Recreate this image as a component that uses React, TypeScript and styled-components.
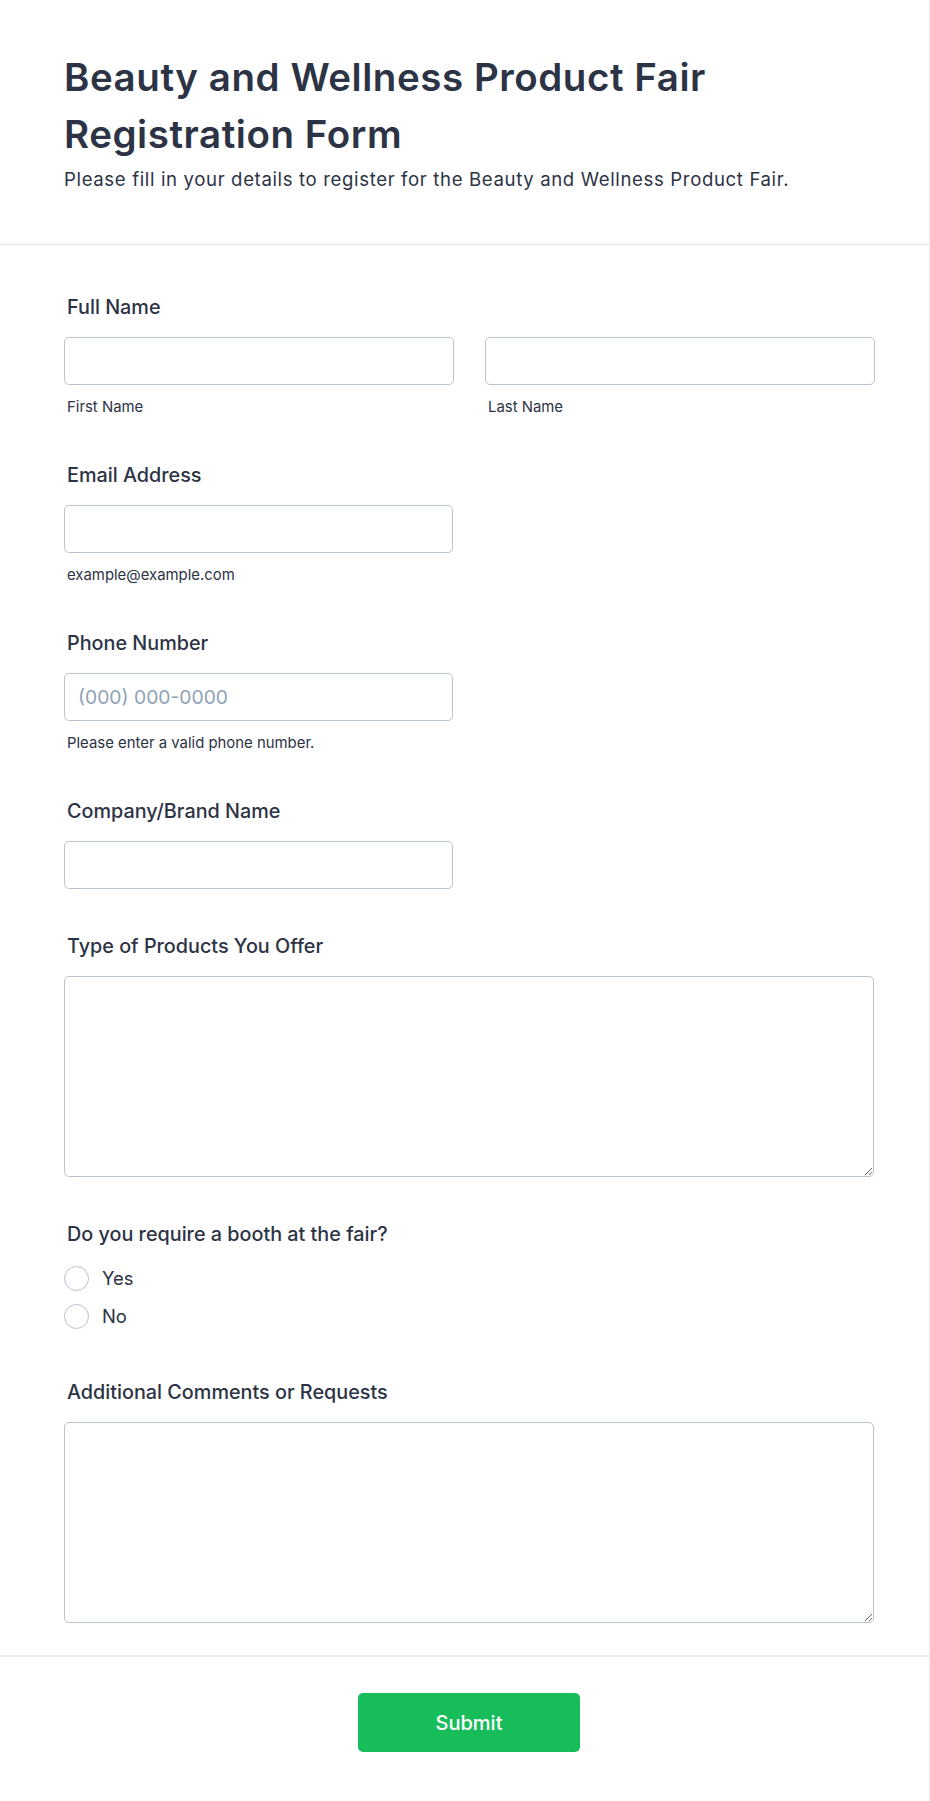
import styled, { createGlobalStyle } from 'styled-components';

const GlobalStyle = createGlobalStyle`
  * {
    box-sizing: border-box;
  }
  body {
    margin: 0;
    background: #ffffff;
    font-family: Inter, "Noto Sans", sans-serif;
    color: #2c3345;
  }
`;

type FieldProps = {
  label: string;
  children: React.ReactNode;
};

function Field({ label, children }: FieldProps) {
  return (
    <FieldBlock>
      <Label>{label}</Label>
      {children}
    </FieldBlock>
  );
}

export default function App() {
  return (
    <>
      <GlobalStyle />
      <Card>
        <Header>
          <Title>Beauty and Wellness Product Fair Registration Form</Title>
          <Subtitle>
            Please fill in your details to register for the Beauty and Wellness Product Fair.
          </Subtitle>
        </Header>

        <Body>
          <Field label="Full Name">
            <NameRow>
              <div>
                <TextInput type="text" />
                <SubLabel>First Name</SubLabel>
              </div>
              <div>
                <TextInput type="text" />
                <SubLabel>Last Name</SubLabel>
              </div>
            </NameRow>
          </Field>

          <Field label="Email Address">
            <TextInput type="email" $half />
            <SubLabel>example@example.com</SubLabel>
          </Field>

          <Field label="Phone Number">
            <TextInput type="tel" placeholder="(000) 000-0000" $half />
            <SubLabel>Please enter a valid phone number.</SubLabel>
          </Field>

          <Field label="Company/Brand Name">
            <TextInput type="text" $half />
          </Field>

          <Field label="Type of Products You Offer">
            <TextArea />
          </Field>

          <Field label="Do you require a booth at the fair?">
            <RadioList>
              <RadioRow>
                <Radio type="radio" name="booth" />
                <RadioText>Yes</RadioText>
              </RadioRow>
              <RadioRow>
                <Radio type="radio" name="booth" />
                <RadioText>No</RadioText>
              </RadioRow>
            </RadioList>
          </Field>

          <Field label="Additional Comments or Requests">
            <TextArea />
          </Field>
        </Body>

        <Footer>
          <SubmitButton type="button">Submit</SubmitButton>
        </Footer>
      </Card>
    </>
  );
}

const Card = styled.div`
  width: 930px;
  background: #ffffff;
  border-right: 1px solid #f1f2f7;
  border-bottom: 1px solid #f1f2f7;
`;

const Header = styled.header`
  padding: 49px 64px 51px;
  border-bottom: 1px solid #dfe1ea;
`;

const Title = styled.h1`
  margin: 0;
  font-size: 38.5px;
  line-height: 57px;
  font-weight: 600;
  letter-spacing: 0.55px;
  color: #2c3345;
  max-width: 760px;
`;

const Subtitle = styled.p`
  margin: 3px 0 0;
  font-size: 18.6px;
  line-height: 27px;
  font-weight: 400;
  letter-spacing: 0.63px;
  color: #2c3345;
`;

const Body = styled.div`
  padding: 48px 55px 0 64px;
`;

const FieldBlock = styled.div`
  margin-bottom: 43px;
`;

const Label = styled.div`
  font-size: 19.8px;
  line-height: 28px;
  font-weight: 500;
  padding-left: 3px;
  margin-bottom: 16px;
  color: #2c3345;
`;

const NameRow = styled.div`
  display: grid;
  grid-template-columns: 390px 390px;
  column-gap: 31px;
`;

const TextInput = styled.input<{ $half?: boolean }>`
  display: block;
  width: ${(p) => (p.$half ? '389px' : '100%')};
  height: 48px;
  padding: 0 13px;
  border: 1px solid #bcc1cf;
  border-radius: 5px;
  background: #ffffff;
  font-family: Inter, "Noto Sans", sans-serif;
  font-size: 19.3px;
  color: #2c3345;
  outline: none;

  &::placeholder {
    color: #8ea2b7;
  }
`;

const SubLabel = styled.div`
  margin-top: 11px;
  padding-left: 3px;
  font-size: 14.9px;
  line-height: 22px;
  color: #2c3345;
`;

const TextArea = styled.textarea`
  display: block;
  width: 100%;
  height: 201px;
  padding: 12px 13px;
  border: 1px solid #bcc1cf;
  border-radius: 5px;
  font-family: Inter, "Noto Sans", sans-serif;
  font-size: 18.4px;
  color: #2c3345;
  outline: none;
  resize: vertical;
`;

const RadioList = styled.div`
  display: flex;
  flex-direction: column;
  margin-top: -5px;
`;

const RadioRow = styled.label`
  display: flex;
  align-items: center;
  height: 38px;
  gap: 13px;
`;

const Radio = styled.input`
  appearance: none;
  margin: 0;
  width: 25px;
  height: 25px;
  border: 1px solid #bcc1cf;
  border-radius: 50%;
  background: #ffffff;
`;

const RadioText = styled.span`
  font-size: 18.4px;
  color: #2c3345;
`;

const Footer = styled.div`
  margin-top: -11px;
  border-top: 2px solid #ebecf2;
  padding: 36px 55px 49px 64px;
  display: flex;
  justify-content: center;
`;

const SubmitButton = styled.button`
  width: 222px;
  height: 59px;
  border: none;
  border-radius: 5px;
  background: #18bd5b;
  color: #ffffff;
  font-family: Inter, "Noto Sans", sans-serif;
  font-size: 20px;
  font-weight: 500;
  cursor: pointer;
`;
